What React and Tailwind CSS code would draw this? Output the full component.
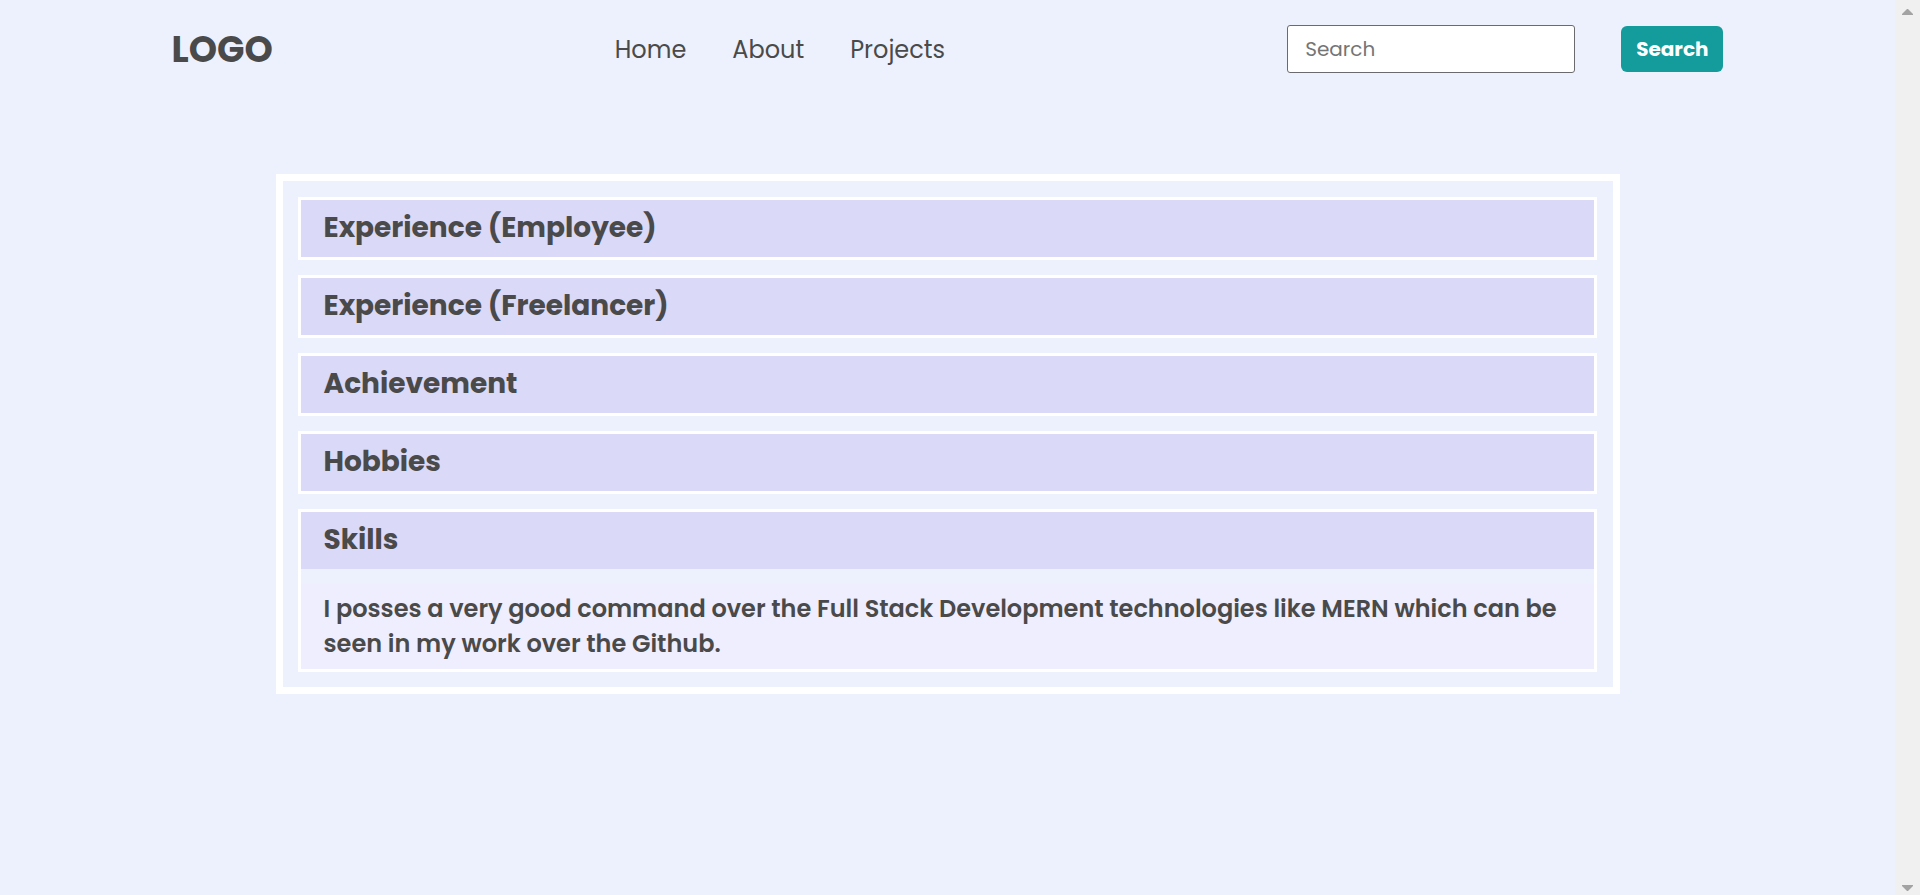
import { useState } from "react";

const links = ["Home", "About", "Projects"];

const sections = [
  { title: "Experience (Employee)", body: "Roles held as a full-time employee." },
  { title: "Experience (Freelancer)", body: "Projects delivered as a freelancer." },
  { title: "Achievement", body: "Awards and certifications." },
  { title: "Hobbies", body: "Things done outside of work." },
  {
    title: "Skills",
    body: "I posses a very good command over the Full Stack Development technologies like MERN which can be seen in my work over the Github.",
  },
];

function Header() {
  return (
    <header className="mx-auto flex h-[98px] w-full max-w-[1552px] items-center justify-between">
      <a href="#top" className="pt-0.5 text-4xl font-bold">LOGO</a>
      <nav className="flex gap-[46px] pt-0.5 text-2xl">
        {links.map((name) => (
          <a key={name} href={"#" + name.toLowerCase()}>{name}</a>
        ))}
      </nav>
      <form className="flex items-center gap-[46px]" onSubmit={(e) => e.preventDefault()}>
        <input
          type="text"
          aria-label="Search"
          placeholder="Search"
          className="h-12 w-72 rounded-[3px] border border-[#6b6b6f] bg-white px-[17px] text-xl placeholder:text-[#757575]"
        />
        <button type="submit" className="h-[46px] rounded-md bg-[#149b9b] px-[15px] text-xl font-bold text-white">
          Search
        </button>
      </form>
    </header>
  );
}

function Section({ title, body, open, onToggle }) {
  return (
    <section className="border-3 border-white">
      <h2>
        <button
          type="button"
          aria-expanded={open}
          onClick={onToggle}
          className="block h-[57px] w-full bg-[#dad9f7] px-[23px] pb-0.5 text-left text-[28px] font-bold"
        >
          {title}
        </button>
      </h2>
      {open && (
        <p className="mt-[15px] bg-[#efeefe] px-[23px] pt-[7px] pb-2 text-2xl leading-[35px] font-semibold">{body}</p>
      )}
    </section>
  );
}

function Scrollbar() {
  return (
    <div aria-hidden="true" className="flex w-[25px] shrink-0 flex-col items-center justify-between bg-[#f0f0f0] pt-[9px] pb-1">
      <svg width="11" height="6" viewBox="0 0 11 6" fill="#a3a3a3"><path d="M5 0h1l5 5v1H0V5z" /></svg>
      <svg width="11" height="6" viewBox="0 0 11 6" fill="#a3a3a3"><path d="M0 0h11v1L6 6H5L0 1z" /></svg>
    </div>
  );
}

export default function App() {
  const [active, setActive] = useState(4);
  return (
    <div className="flex min-h-screen bg-[#ecf1fd] font-['Poppins','Inter',sans-serif] text-[#4a4a4a]">
      <div className="min-w-0 flex-1">
        <Header />
        <main className="mx-auto mt-[76px] flex w-full max-w-[1344px] flex-col gap-[15px] border-7 border-white pt-4 pr-4 pb-[15px] pl-[15px]">
          {sections.map((s, i) => (
            <Section key={s.title} {...s} open={i === active} onToggle={() => setActive(i === active ? -1 : i)} />
          ))}
        </main>
      </div>
      <Scrollbar />
    </div>
  );
}
